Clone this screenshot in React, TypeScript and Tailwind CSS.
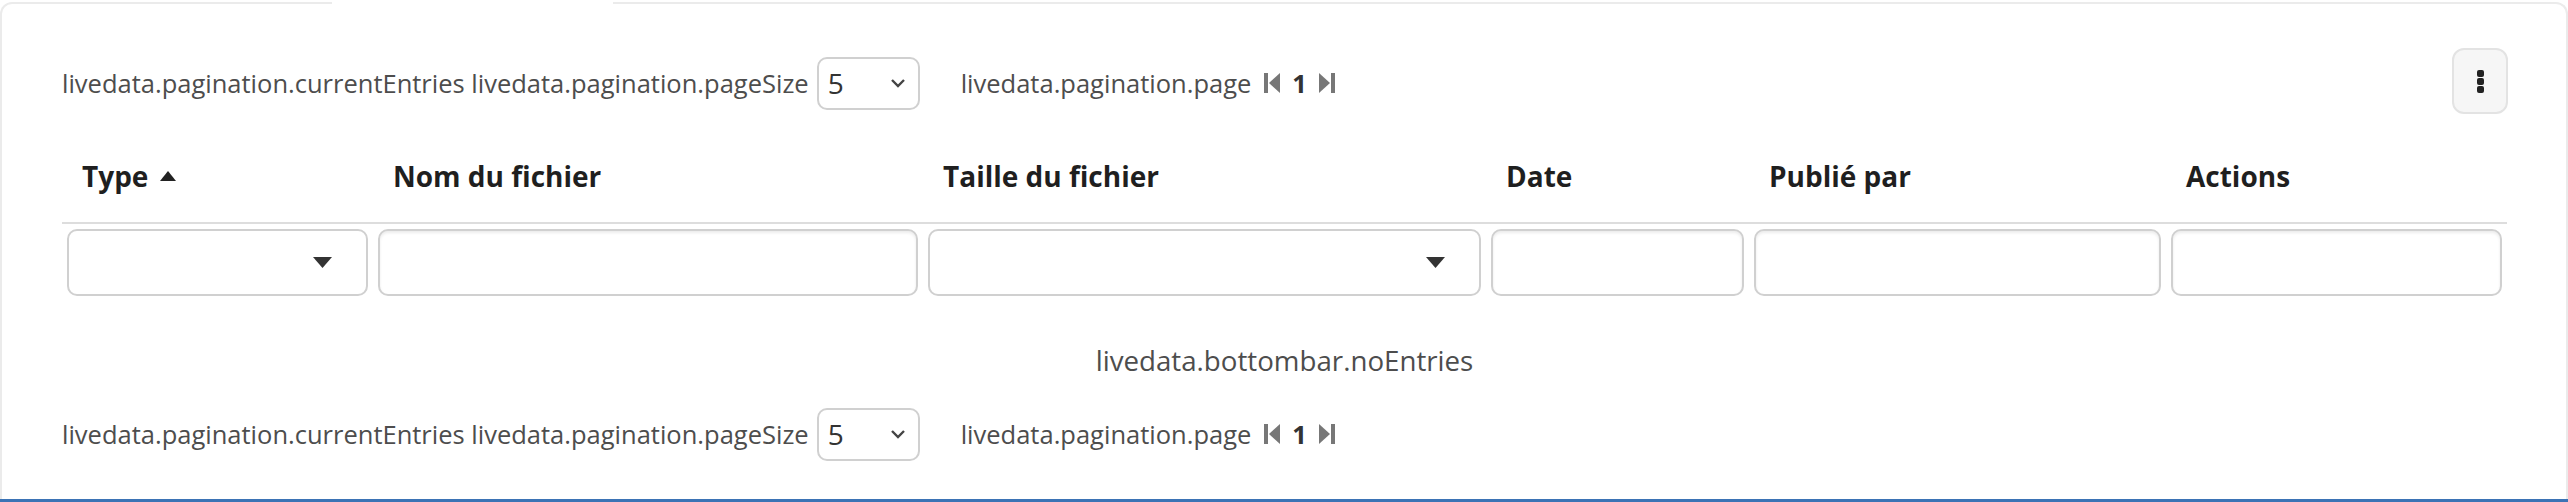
import React from "react";

const font = { fontFamily: '"Open Sans", "Noto Sans", sans-serif' };

const cols = [
  { label: "Type", sort: true, filter: "select" },
  { label: "Nom du fichier", filter: "text" },
  { label: "Taille du fichier", filter: "select" },
  { label: "Date", filter: "text" },
  { label: "Publié par", filter: "text" },
  { label: "Actions", filter: "text" },
];

const Chevron = () => (
  <svg width="16" height="10" viewBox="0 0 16 10" className="text-[#444]">
    <polyline points="2,2 8,8 14,2" fill="none" stroke="currentColor" strokeWidth="2.4" />
  </svg>
);

const FirstIcon = () => (
  <svg width="17" height="22" viewBox="0 0 17 22" className="text-[#777]">
    <rect x="0" y="1" width="4" height="20" fill="currentColor" />
    <polygon points="16,1 5,11 16,21" fill="currentColor" />
  </svg>
);

const LastIcon = () => (
  <svg width="17" height="22" viewBox="0 0 17 22" className="text-[#777]">
    <polygon points="1,1 12,11 1,21" fill="currentColor" />
    <rect x="13" y="1" width="4" height="20" fill="currentColor" />
  </svg>
);

const Pagination = () => (
  <div className="flex items-center text-[25.5px] text-[#4d4d4d]">
    <span>livedata.pagination.currentEntries livedata.pagination.pageSize</span>
    <div className="ml-[8px] flex h-[53px] w-[103px] items-center justify-between rounded-[10px] border-2 border-[#d0d0d0] bg-white pl-[9px] pr-[12px] text-[28px] text-[#333]">
      <span>5</span>
      <Chevron />
    </div>
    <span className="ml-[41px]">livedata.pagination.page</span>
    <div className="ml-[13px] flex items-center">
      <FirstIcon />
      <span className="mx-[11px] font-bold text-[#333]">1</span>
      <LastIcon />
    </div>
  </div>
);

export default function App() {
  return (
    <div style={font} className="flex h-[502px] w-full flex-col bg-white">
      <div className="relative mt-[2px] h-[497px] rounded-t-[12px] border-2 border-b-0 border-[#ebebeb] pl-[60px] pr-[58px] pt-[46px]">
        {/* active tab gap in the top border */}
        <div className="absolute left-[330px] top-[-2px] h-[3px] w-[281px] bg-white" />

        <div className="flex h-[66px] items-center justify-between">
          <Pagination />
          <button className="-mt-[4px] flex h-[66px] w-[56px] flex-col items-center justify-center gap-[1px] rounded-[12px] border-2 border-[#e3e3e3] bg-[#f6f6f6]">
            <span className="h-[7px] w-[7px] rounded-[2px] bg-[#222]" />
            <span className="h-[7px] w-[7px] rounded-[2px] bg-[#222]" />
            <span className="h-[7px] w-[7px] rounded-[2px] bg-[#222]" />
          </button>
        </div>

        <div className="mt-[14px] w-[2445px]">
          <div className="grid grid-cols-[311px_550px_563px_263px_417px_341px] border-b-2 border-[#dddddd]">
            {cols.map((c) => (
              <div key={c.label} className="flex h-[92px] items-center gap-[12px] px-[20px] text-[28px] font-bold text-[#1f1f1f]">
                <span>{c.label}</span>
                {c.sort && (
                  <svg width="16" height="10" viewBox="0 0 16 10">
                    <polygon points="8,0 16,10 0,10" fill="#222" />
                  </svg>
                )}
              </div>
            ))}
          </div>
          <div className="grid grid-cols-[311px_550px_563px_263px_417px_341px]">
            {cols.map((c) => (
              <div key={c.label} className="px-[5px] pt-[5px]">
                {c.filter === "select" ? (
                  <div className="flex h-[67px] items-center justify-end rounded-[10px] border-2 border-[#d0d0d0] bg-white pr-[34px]">
                    <svg width="19" height="11" viewBox="0 0 19 11">
                      <polygon points="0,0 19,0 9.5,11" fill="#333" />
                    </svg>
                  </div>
                ) : (
                  <div className="h-[67px] rounded-[10px] border-2 border-[#d0d0d0] bg-white shadow-[inset_0_2px_3px_rgba(0,0,0,0.08)]" />
                )}
              </div>
            ))}
          </div>
          <div className="mt-[45px] text-center text-[27.7px] leading-[38px] text-[#4d4d4d]">
            livedata.bottombar.noEntries
          </div>
        </div>

        <div className="mt-[29px] flex h-[52px] items-center">
          <Pagination />
        </div>
      </div>
      <div className="h-[3px] w-full bg-[#3b73b5]" />
    </div>
  );
}
